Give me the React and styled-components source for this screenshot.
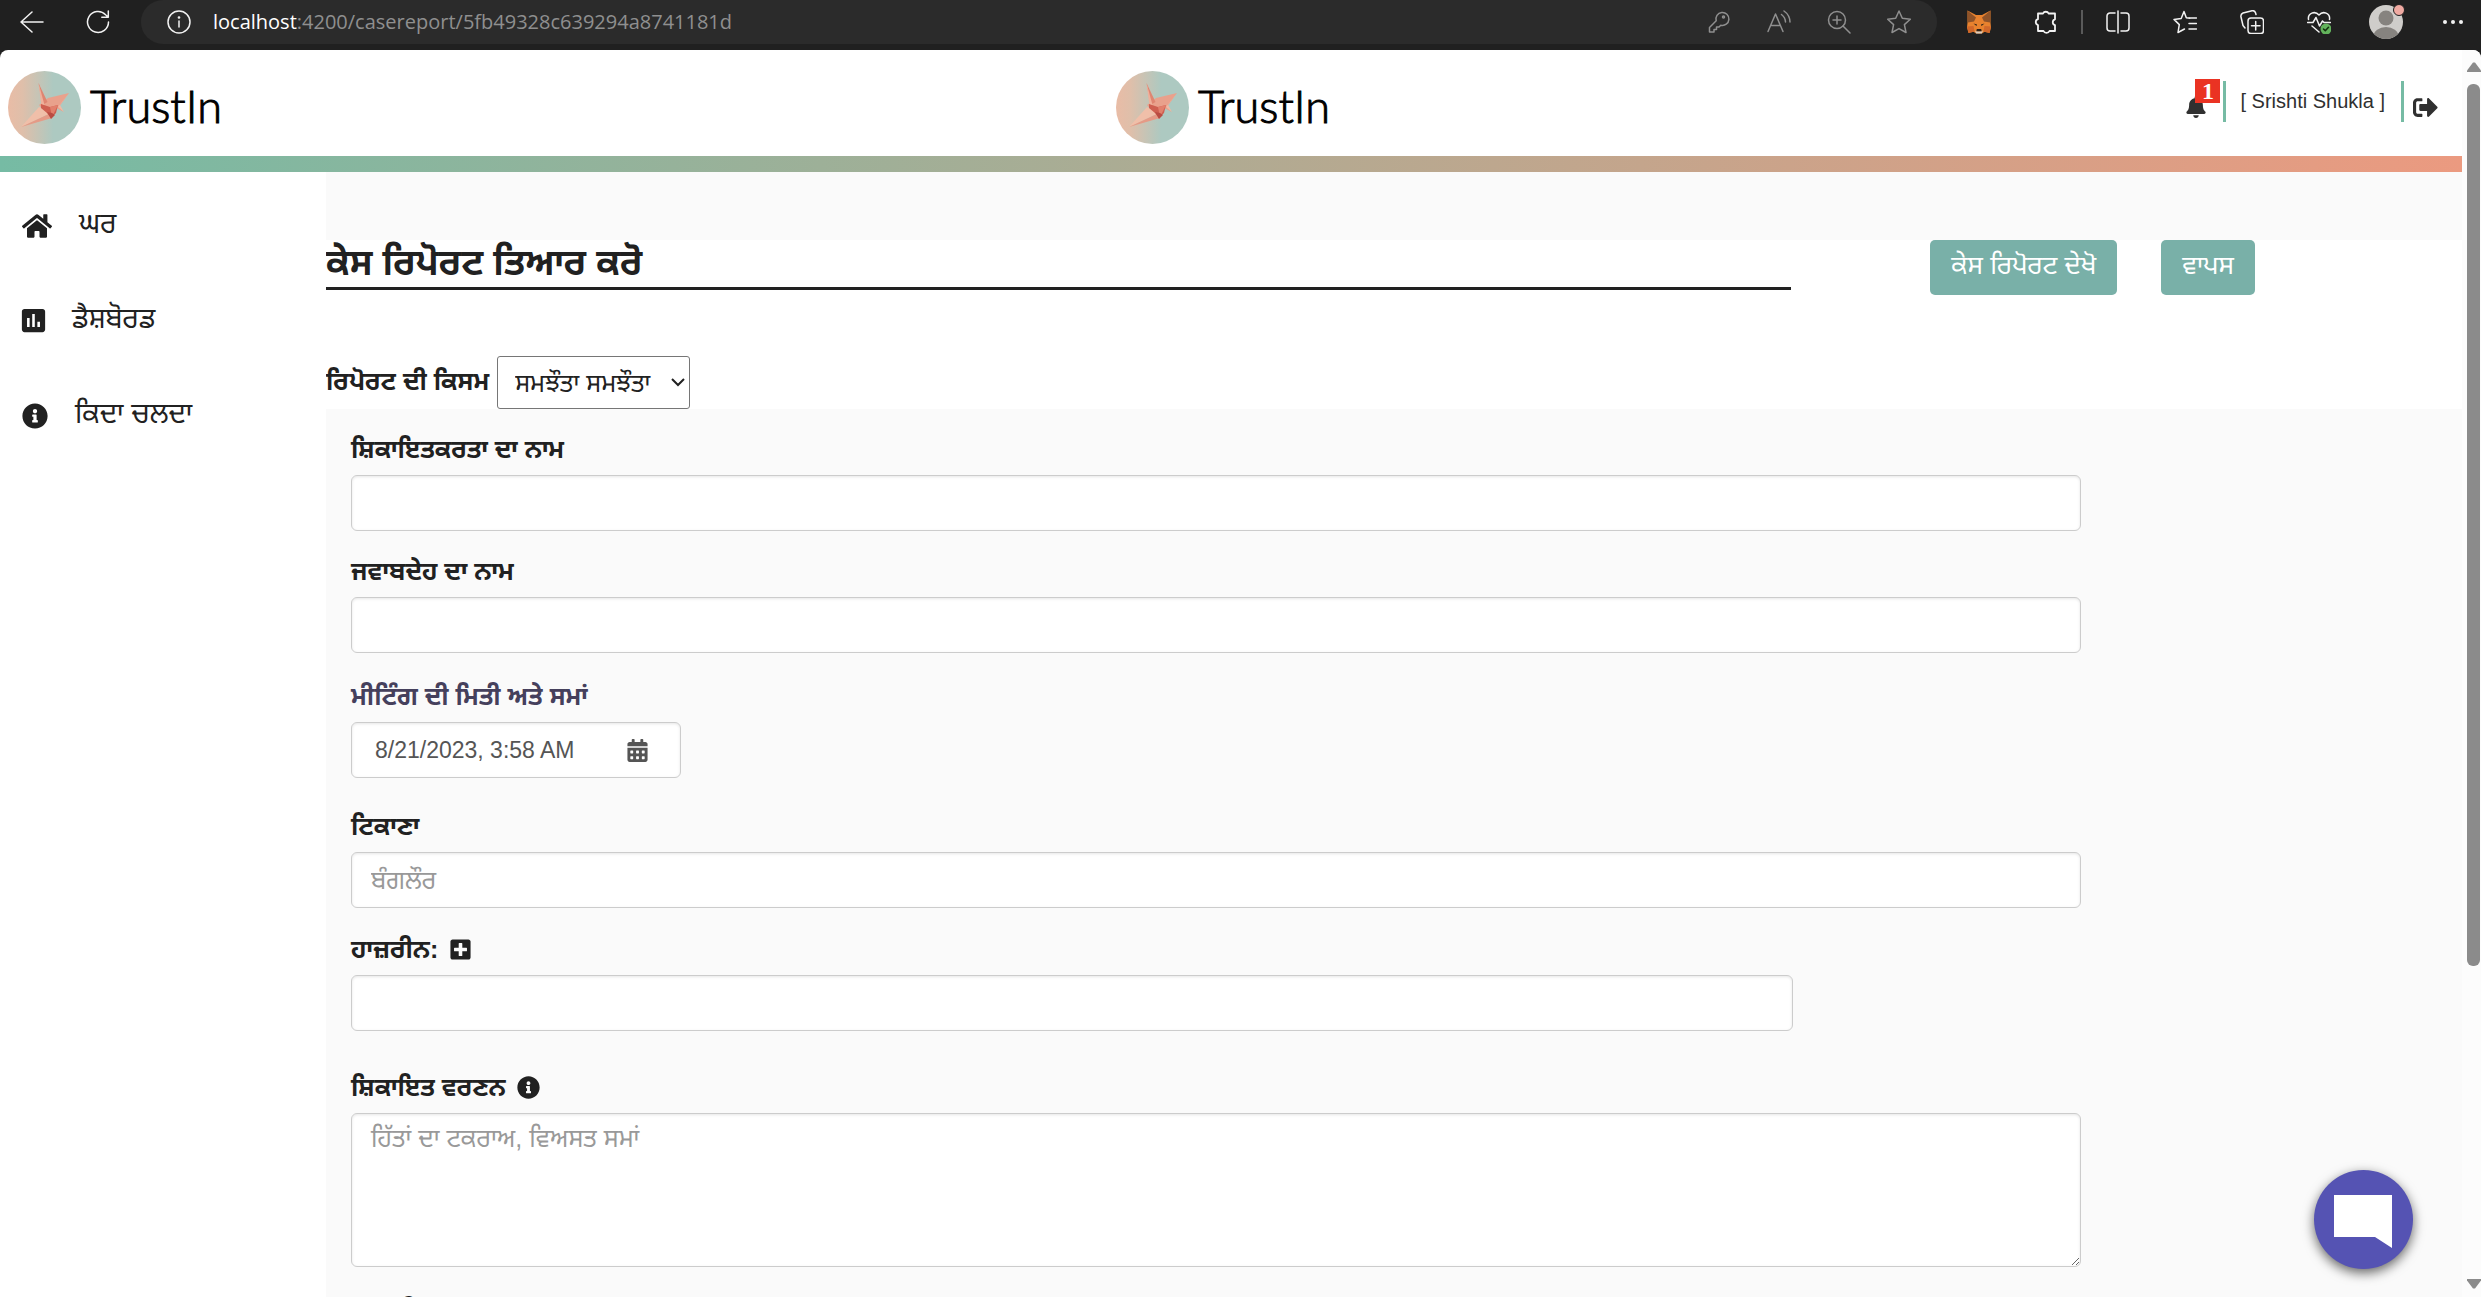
import React, { useState } from 'react';
import styled, { createGlobalStyle } from 'styled-components';
import { FaHome, FaInfoCircle, FaBell, FaSignOutAlt, FaCalendarAlt, FaPlusSquare } from 'react-icons/fa';
import { MdAssessment } from 'react-icons/md';

const GlobalStyle = createGlobalStyle`
  * {
    box-sizing: border-box;
  }

  body {
    margin: 0;
    overflow: hidden;
    background: #202020;
    color: #212121;
    font-family: 'Liberation Sans', 'Noto Sans Gurmukhi', Raavi, sans-serif;
    font-size: 24px;
  }

  button, input, select, textarea {
    font-family: inherit;
  }
`;

const Browser = styled.div`
  height: 100vh;
  display: flex;
  flex-direction: column;
`;

/* ---------- browser toolbar ---------- */

const Toolbar = styled.div`
  flex: none;
  height: 50px;
  padding: 0 16px 6px 20px;
  display: flex;
  align-items: center;
  background: #202020;
`;

const IconButton = styled.button`
  flex: none;
  width: 24px;
  height: 24px;
  padding: 0;
  border: 0;
  background: none;
  color: ${props => props.$dim ? '#8f8f8f' : '#f2f2f2'};
  cursor: pointer;

  svg {
    display: block;
    width: 24px;
    height: 24px;
  }
`;

const NavButtons = styled.div`
  display: flex;
  gap: 42px;
  margin-right: 31px;
`;

const AddressBar = styled.div`
  flex: 1;
  height: 44px;
  padding: 0 26px;
  display: flex;
  align-items: center;
  gap: 36px;
  border-radius: 22px;
  background: #2b2b2b;
`;

const Url = styled.div`
  flex: 1;
  margin-left: -14px;
  font-family: 'Open Sans', sans-serif;
  font-size: 20px;
  line-height: 24px;
  color: #8f8f8f;

  span {
    color: #fff;
  }
`;

const Extensions = styled.div`
  display: flex;
  align-items: center;
  gap: 43px;
`;

const ExtensionArea = styled(Extensions)`
  margin-left: 30px;
`;

const Divider = styled.div`
  width: 2px;
  height: 24px;
  margin: 0 23px;
  background: #5a5a5a;
`;

const Avatar = styled(IconButton)`
  width: 34px;
  height: 34px;
  margin: 0 -5px;

  svg {
    width: 34px;
    height: 34px;
    overflow: visible;
  }
`;

const Stroke = ({ children }) => (
  <svg
    viewBox="0 0 24 24"
    fill="none"
    stroke="currentColor"
    strokeWidth="1.5"
    strokeLinecap="round"
    strokeLinejoin="round"
    aria-hidden="true"
  >
    {children}
  </svg>
);

const BackIcon = () => (
  <Stroke><path d="M23 12H1M12 2 1 12l11 10" /></Stroke>
);

const ReloadIcon = () => (
  <Stroke><path d="M22.5 12A10.5 10.5 0 1 1 19.6 4.7L22 7M22.3 1v6.3h-6.5" /></Stroke>
);

const SiteInfoIcon = () => (
  <Stroke>
    <circle cx="12" cy="12" r="11" />
    <path d="M12 11v6" />
    <circle cx="12" cy="7.5" r=".6" fill="currentColor" />
  </Stroke>
);

const KeyIcon = () => (
  <Stroke>
    <path d="M9.2 10.8 2.5 17.5V22H7v-2.5h2.5V17H12l1.8-1.8a6.5 6.5 0 1 0-4.6-4.4Z" />
    <circle cx="16.5" cy="7" r="1" />
  </Stroke>
);

const ReadAloudIcon = () => (
  <Stroke>
    <path d="M1 21.5 8.5 4 16 21.5M3.7 15.5h9.6M14.5 4.5a10 10 0 0 1 4 7.5M17 1a14 14 0 0 1 6 11" />
  </Stroke>
);

const ZoomIcon = () => (
  <Stroke>
    <circle cx="10" cy="10" r="8.5" />
    <path d="m16 16 7 7M10 6v8M6 10h8" />
  </Stroke>
);

const StarIcon = () => (
  <Stroke>
    <path d="m12 1 3.3 7.3 8 .9-5.900 5.400 1.600 7.900-7-3.900-7 3.900 1.600-7.900L.7 9.200l8-.9Z" />
  </Stroke>
);

const FoxIcon = () => (
  <svg viewBox="0 0 24 24" aria-hidden="true">
    <path fill="#e8822e" d="M.5.5 9 5h6L23.500.5v12l.5 5-1.500 5.500-5-1.200L15 23.500H9l-2.500-1.700-5 1.200L0 17.500l.5-5Z" />
    <path fill="#8f5329" d="m.5.500 8.500 7L7 11.500.8 12.500Zm23 0-8.500 7 2 4 6.200 1Z" />
    <path fill="#d0672a" d="m0 16.500 6.500-.5 1 5.500-6 1.500Zm24 0-6.500-.5-1 5.500 6 1.500Z" />
    <path fill="#2b2119" d="m6.500 13.500 3.500 1-.5 1.500Zm11 0-3.500 1 .5 1.500ZM9.800 19h4.400l.5 2.500H9.300Z" />
    <path fill="#d9cdc0" d="m8 20.500 1.500 1h5l1.500-1-1.200 3H9.200Z" />
  </svg>
);

const PuzzleIcon = () => (
  <Stroke>
    <path strokeWidth="1.8" d="M4 3.500h5a3 2.700 0 0 1 5.600 0H21v5.800a3 3 0 0 0 0 5.800V21h-5.500a3.200 2.800 0 0 1-6 0H4v-6a3 3 0 0 1 0-5.800Z" />
  </Stroke>
);

const SplitIcon = () => (
  <Stroke>
    <path d="M9 3H4a3 3 0 0 0-3 3v12a3 3 0 0 0 3 3h5M15 3h5a3 3 0 0 1 3 3v12a3 3 0 0 1-3 3h-5M12 1v22" />
  </Stroke>
);

const FavoritesIcon = () => (
  <Stroke>
    <path d="m17 8.200-3.700-.5L11 1.500 8.200 8.500 1 9.400l5.300 5.200L5 22.500l6.500-3.500M16 8h7.500M16 13.500h7.500M16 19h7.500" />
  </Stroke>
);

const CollectionsIcon = () => (
  <Stroke>
    <rect x="8" y="8" width="15.5" height="15.5" rx="3" />
    <path d="M15.700 11.500v8.500M11.500 15.700h8.500M5 18 3 15.500 1 7a3.500 3.500 0 0 1 2-4l9-2.200a3 3 0 0 1 3.500 2l.5 1.700" />
  </Stroke>
);

const HeartIcon = () => (
  <Stroke>
    <path d="M1.500 9.500C.5 3 8 .5 12 5c4-4.500 11.500-2 10.500 4.500M.5 12.500h5.500l3-5 3.500 8.500 3-5 1.500 1.500h6.500M5 16l7 6" />
    <circle cx="19" cy="19" r="5.5" fill="#63b35c" stroke="none" />
    <path stroke="#14300f" d="m16.500 19 1.800 1.800 3.200-3.600" />
  </Stroke>
);

const PersonIcon = () => (
  <svg viewBox="0 0 34 34" aria-hidden="true">
    <clipPath id="face"><circle cx="17" cy="17" r="17" /></clipPath>
    <g clipPath="url(#face)">
      <rect width="34" height="34" fill="#cfcdca" />
      <circle cx="17" cy="13" r="7.5" fill="#86837f" />
      <ellipse cx="17" cy="31" rx="12.5" ry="9" fill="#86837f" />
    </g>
    <circle cx="30" cy="5" r="5.5" fill="#f0aaa2" stroke="#202020" strokeWidth="1" />
  </svg>
);

const MoreIcon = () => (
  <svg viewBox="0 0 24 24" fill="currentColor" aria-hidden="true">
    <circle cx="4" cy="12" r="2" />
    <circle cx="12" cy="12" r="2" />
    <circle cx="20" cy="12" r="2" />
  </svg>
);

const BrowserToolbar = () => (
  <Toolbar>
    <NavButtons>
      <IconButton aria-label="Back"><BackIcon /></IconButton>
      <IconButton aria-label="Refresh"><ReloadIcon /></IconButton>
    </NavButtons>
    <AddressBar>
      <IconButton aria-label="Site information"><SiteInfoIcon /></IconButton>
      <Url><span>localhost</span>:4200/casereport/5fb49328c639294a8741181d</Url>
      <IconButton $dim aria-label="Passwords"><KeyIcon /></IconButton>
      <IconButton $dim aria-label="Read aloud"><ReadAloudIcon /></IconButton>
      <IconButton $dim aria-label="Zoom"><ZoomIcon /></IconButton>
      <IconButton $dim aria-label="Add to favorites"><StarIcon /></IconButton>
    </AddressBar>
    <ExtensionArea>
      <IconButton aria-label="Wallet"><FoxIcon /></IconButton>
      <IconButton aria-label="Extensions"><PuzzleIcon /></IconButton>
    </ExtensionArea>
    <Divider />
    <Extensions>
      <IconButton aria-label="Split screen"><SplitIcon /></IconButton>
      <IconButton aria-label="Favorites"><FavoritesIcon /></IconButton>
      <IconButton aria-label="Collections"><CollectionsIcon /></IconButton>
      <IconButton aria-label="Performance"><HeartIcon /></IconButton>
      <Avatar aria-label="Profile"><PersonIcon /></Avatar>
      <IconButton aria-label="Settings and more"><MoreIcon /></IconButton>
    </Extensions>
  </Toolbar>
);

/* ---------- page frame ---------- */

const Viewport = styled.div`
  flex: 1;
  min-height: 0;
  display: flex;
  border-radius: 8px 8px 0 0;
  overflow: hidden;
  background: #fff;
`;

const Page = styled.div`
  flex: 1;
  min-width: 0;
  display: flex;
  flex-direction: column;
`;

const ScrollTrack = styled.div`
  flex: none;
  width: 19px;
  padding: 12px 1px 8px 5px;
  display: flex;
  flex-direction: column;
  align-items: center;
  background: #fcfcfc;

  svg {
    flex: none;
    display: block;
  }
`;

const ScrollThumb = styled.div`
  flex: 881;
  width: 13px;
  margin-top: 12px;
  border-radius: 6px;
  background: #8b8b8b;
`;

const ScrollRest = styled.div`
  flex: 313;
`;

const Scrollbar = () => (
  <ScrollTrack>
    <svg width="14" height="10" viewBox="0 0 14 10"><path fill="#8b8b8b" d="M6 .5h2l6 8V10H0V8.500Z" /></svg>
    <ScrollThumb />
    <ScrollRest />
    <svg width="14" height="10" viewBox="0 0 14 10"><path fill="#8b8b8b" d="M6 9.500h2l6-8V0H0v1.500Z" /></svg>
  </ScrollTrack>
);

/* ---------- header ---------- */

const Header = styled.header`
  flex: none;
  height: 106px;
  padding: 0 24px 0 8px;
  display: grid;
  grid-template-columns: 1fr auto 1fr;
  align-items: center;
`;

const Logo = styled.a`
  padding-top: 8px;
  display: flex;
  align-items: center;
  gap: 9px;
  color: #000;
  font-family: Lato, sans-serif;
  font-size: 45px;
  font-weight: 300;
  line-height: 72px;
  text-decoration: none;
`;

const LogoText = styled.span`
  padding-bottom: 2px;
  -webkit-text-stroke: 1px #000;
`;

const GradientBar = styled.div`
  flex: none;
  height: 16px;
  background: linear-gradient(90deg, #76bba4, #eb9a80);
`;

const UserArea = styled.div`
  padding-bottom: 4px;
  display: flex;
  align-items: center;
  justify-content: flex-end;
  color: #303030;
  font-size: 20px;
`;

const Bell = styled.button`
  position: relative;
  width: 22px;
  height: 24px;
  margin: 12px 16px 0 0;
  padding: 0;
  border: 0;
  background: none;
  color: inherit;
  font-size: 22px;

  svg {
    display: block;
  }
`;

const Badge = styled.span`
  position: absolute;
  left: 10px;
  top: -16px;
  width: 25px;
  height: 24px;
  background: #ea3323;
  color: #fff;
  font: bold 24px/24px 'Liberation Serif', serif;
  text-align: center;
`;

const UserName = styled.div`
  height: 41px;
  padding: 0 16px 0 14px;
  border: solid #76bba4;
  border-width: 0 3px;
  line-height: 41px;
`;

const LogoutButton = styled.button`
  margin-left: 9px;
  padding: 12px 0 0;
  border: 0;
  background: none;
  color: inherit;
  font-size: 25px;

  svg {
    display: block;
  }
`;

const Crane = ({ id }) => (
  <svg width="73" height="73" viewBox="0 0 73 73" aria-hidden="true">
    <linearGradient id={id}>
      <stop offset="0" stopColor="#e9bca6" />
      <stop offset=".2" stopColor="#dfbfaa" />
      <stop offset=".62" stopColor="#adc9c1" />
      <stop offset="1" stopColor="#adc9c1" />
    </linearGradient>
    <circle cx="36.5" cy="36.5" r="36.5" fill={`url(#${id})`} />
    <path fill="#e9a18c" d="M40 27 61 22 51 36l5 5-8-4-5 11-12-14Z" />
    <path fill="#f0b9a3" d="m61 22-9 12 4 7-6-5Z" />
    <path fill="#df8571" d="m30.500 12 9 19-5 3Z" />
    <path fill="#efb09b" d="m30.500 12 6 22-3 1Z" />
    <path fill="#f0bfa9" d="M13 56 31 36l12 6Z" />
    <path fill="#e59a86" d="m13 56 30-14 1 5Z" />
    <path fill="#cf5f50" d="m33 33 9 3 8-2-2 8-5 5-4-5-6-5Z" />
    <path fill="#e2806c" d="m42 36 8-2-6 12Z" />
    <path fill="#b94c42" d="m39 41 5 1 3 2-4 4Z" />
  </svg>
);

const Brand = ({ id }) => (
  <Logo href="#home">
    <Crane id={id} />
    <LogoText>TrustIn</LogoText>
  </Logo>
);

/* ---------- side menu ---------- */

const Body = styled.div`
  flex: 1;
  min-height: 0;
  display: flex;
`;

const Sidebar = styled.nav`
  flex: none;
  width: 326px;
  padding: 29px 22px;
  display: flex;
  flex-direction: column;
  gap: 46px;
`;

const MenuLink = styled.a`
  height: 49px;
  display: flex;
  align-items: center;
  gap: 27px;
  color: #212121;
  font-size: 28px;
  text-decoration: none;

  svg {
    flex: none;
  }
`;

const DashboardIcon = styled(MdAssessment)`
  margin: 0 -4px;
`;

/* ---------- case report form ---------- */

const Main = styled.main`
  flex: 1;
  min-width: 0;
  padding-top: 68px;
  background: #fafafa;
  overflow: hidden;
`;

const Intro = styled.section`
  height: 169px;
  display: flex;
  flex-direction: column;
  justify-content: space-between;
  background: #fff;
`;

const TitleRow = styled.div`
  display: flex;
  align-items: flex-start;
  padding-right: 207px;
`;

const Title = styled.h1`
  flex: 1;
  height: 50px;
  margin: 0 139px 0 0;
  border-bottom: 3px solid #212121;
  font-size: 36px;
  line-height: 46px;
  font-weight: bold;
`;

const ActionButton = styled.button`
  height: 55px;
  padding: 0 21px;
  border: 0;
  border-radius: 5px;
  background: #79b0a8;
  color: #fff;
  font-size: 26px;
  cursor: pointer;

  & + & {
    margin-left: 44px;
  }
`;

const TypeRow = styled.div`
  display: flex;
  align-items: center;
  gap: 8px;
`;

const SelectBox = styled.div`
  position: relative;

  svg {
    position: absolute;
    right: 5px;
    top: 22px;
    pointer-events: none;
  }
`;

const Select = styled.select`
  display: block;
  width: 193px;
  height: 53px;
  padding: 0 17px;
  appearance: none;
  border: 1px solid #767676;
  border-radius: 3px;
  background: #fff;
  color: #212121;
  font-size: 25px;
`;

const Form = styled.form`
  width: 83.333%;
  padding: 22px 25px 0;
`;

const Field = styled.div`
  margin-bottom: ${props => props.$gap || 22}px;
`;

const Label = styled.label`
  display: block;
  height: 44px;
  color: ${props => props.$muted ? '#45405c' : '#212121'};
  font-size: 25px;
  font-weight: bold;
  line-height: 36px;
  white-space: nowrap;
`;

const TypeLabel = styled(Label)`
  line-height: 40px;
`;

const LabelRow = styled.div`
  display: flex;
  gap: 11px;

  svg {
    display: block;
  }
`;

const LabelIcon = styled.button`
  height: 36px;
  padding: 0;
  border: 0;
  background: none;
  color: #212121;
  font-size: 23px;
`;

const control = `
  display: block;
  width: 100%;
  border: 1px solid #ccc;
  border-radius: 6px;
  background: #fff;
  box-shadow: inset 0 1px 3px rgba(0, 0, 0, .1);
  color: #555;
  font-size: 25px;

  &::placeholder {
    color: #999;
    opacity: 1;
  }
`;

const Input = styled.input`
  ${control}
  width: ${props => props.$short ? '83.333%' : '100%'};
  height: 56px;
  padding: 0 19px;
`;

const TextArea = styled.textarea`
  ${control}
  height: 154px;
  padding: 10px 19px;
  resize: vertical;
`;

const DateBox = styled.div`
  ${control}
  width: 330px;
  height: 56px;
  padding: 0 31px 0 23px;
  display: flex;
  align-items: center;
  justify-content: space-between;

  input {
    width: 220px;
    padding: 0;
    border: 0;
    background: none;
    color: #555;
    font-size: 23px;
  }

  button {
    padding: 0;
    border: 0;
    background: none;
    color: #555;
    font-size: 23px;
  }

  svg {
    display: block;
  }
`;

const ChatButton = styled.button`
  position: fixed;
  right: 68px;
  bottom: 28px;
  width: 99px;
  height: 99px;
  padding: 0;
  border: 0;
  border-radius: 50%;
  background: #5553b3;
  box-shadow: 0 4px 12px rgba(0, 0, 0, .6);
  cursor: pointer;

  svg {
    display: block;
  }
`;

const menu = [
  { href: '#home', text: 'ਘਰ', icon: <FaHome size={30} /> },
  { href: '#dashboard', text: 'ਡੈਸ਼ਬੋਰਡ', icon: <DashboardIcon size={31} /> },
  { href: '#how', text: 'ਕਿਦਾ ਚਲਦਾ', icon: <FaInfoCircle size={26} /> },
];

const App = () => {
  const [date, setDate] = useState('8/21/2023, 3:58 AM');

  return (
    <Browser>
      <GlobalStyle />
      <BrowserToolbar />
      <Viewport>
        <Page>
          <Header>
            <Brand id="crane-left" />
            <Brand id="crane-center" />
            <UserArea>
              <Bell aria-label="Notifications">
                <FaBell />
                <Badge>1</Badge>
              </Bell>
              <UserName>[ Srishti Shukla ]</UserName>
              <LogoutButton aria-label="Log out"><FaSignOutAlt /></LogoutButton>
            </UserArea>
          </Header>
          <GradientBar />
          <Body>
            <Sidebar>
              {menu.map(item => (
                <MenuLink key={item.href} href={item.href}>
                  {item.icon}
                  {item.text}
                </MenuLink>
              ))}
            </Sidebar>
            <Main>
              <Intro>
                <TitleRow>
                  <Title>ਕੇਸ ਰਿਪੋਰਟ ਤਿਆਰ ਕਰੋ</Title>
                  <ActionButton>ਕੇਸ ਰਿਪੋਰਟ ਦੇਖੋ</ActionButton>
                  <ActionButton>ਵਾਪਸ</ActionButton>
                </TitleRow>
                <TypeRow>
                  <TypeLabel htmlFor="type">ਰਿਪੋਰਟ ਦੀ ਕਿਸਮ</TypeLabel>
                  <SelectBox>
                    <Select id="type">
                      <option>ਸਮਝੌਤਾ ਸਮਝੌਤਾ</option>
                    </Select>
                    <svg width="14" height="9" viewBox="0 0 14 9" fill="none" stroke="#212121" strokeWidth="2">
                      <path d="m1 1 6 6 6-6" />
                    </svg>
                  </SelectBox>
                </TypeRow>
              </Intro>
              <Form onSubmit={e => e.preventDefault()}>
                <Field>
                  <Label htmlFor="complainant">ਸ਼ਿਕਾਇਤਕਰਤਾ ਦਾ ਨਾਮ</Label>
                  <Input id="complainant" />
                </Field>
                <Field $gap={25}>
                  <Label htmlFor="respondent">ਜਵਾਬਦੇਹ ਦਾ ਨਾਮ</Label>
                  <Input id="respondent" />
                </Field>
                <Field $gap={30}>
                  <Label $muted htmlFor="date">ਮੀਟਿੰਗ ਦੀ ਮਿਤੀ ਅਤੇ ਸਮਾਂ</Label>
                  <DateBox>
                    <input id="date" value={date} onChange={e => setDate(e.target.value)} />
                    <button type="button" aria-label="Pick a date"><FaCalendarAlt /></button>
                  </DateBox>
                </Field>
                <Field $gap={23}>
                  <Label htmlFor="place">ਟਿਕਾਣਾ</Label>
                  <Input id="place" placeholder="ਬੰਗਲੌਰ" />
                </Field>
                <Field $gap={38}>
                  <LabelRow>
                    <Label htmlFor="attendees">ਹਾਜ਼ਰੀਨ:</Label>
                    <LabelIcon type="button" aria-label="Add attendee"><FaPlusSquare /></LabelIcon>
                  </LabelRow>
                  <Input $short id="attendees" />
                </Field>
                <Field $gap={25}>
                  <LabelRow>
                    <Label htmlFor="details">ਸ਼ਿਕਾਇਤ ਵਰਣਨ</Label>
                    <LabelIcon type="button" aria-label="About the description"><FaInfoCircle /></LabelIcon>
                  </LabelRow>
                  <TextArea id="details" placeholder="ਹਿੱਤਾਂ ਦਾ ਟਕਰਾਅ, ਵਿਅਸਤ ਸਮਾਂ" />
                </Field>
                <Field>
                  <Label htmlFor="testimony">ਗਵਾਹੀ</Label>
                  <Input id="testimony" />
                </Field>
              </Form>
            </Main>
          </Body>
        </Page>
        <Scrollbar />
      </Viewport>
      <ChatButton aria-label="Open chat">
        <svg width="99" height="99" viewBox="0 0 99 99"><path fill="#fff" d="M20 25h58v53L61 67H20Z" /></svg>
      </ChatButton>
    </Browser>
  );
};

export default App;
